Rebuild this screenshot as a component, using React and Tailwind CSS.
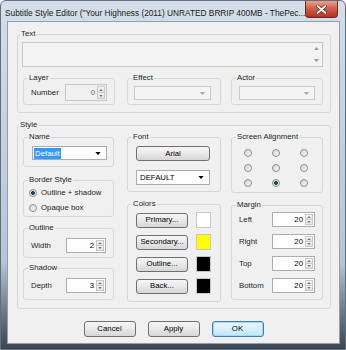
import React from 'react'

const DownArrow = ({ color = '#000', w = 7, h = 4 }) => (
  <svg width={w} height={h} viewBox="0 0 7 4"><path d="M0 0h7L3.5 4z" fill={color} /></svg>
)
const UpArrow = ({ color = '#000', w = 5, h = 3 }) => (
  <svg width={w} height={h} viewBox="0 0 7 4"><path d="M0 4h7L3.5 0z" fill={color} /></svg>
)

const GroupBox = ({ label, className, legendClass = 'ml-[4px]', children }) => (
  <fieldset className={`border border-[#d3d7dc] rounded-[3px] ${className}`}>
    <legend className={`px-[1px] leading-[10px] text-[#1e1e1e] ${legendClass}`}>{label}</legend>
    {children}
  </fieldset>
)

const Spin = ({ value, className, disabled }) => (
  <div className={`flex border ${disabled ? 'border-[#c4c7cc] bg-[#f0f0f0] text-[#6d6d6d]' : 'border-[#abadb3] bg-white text-black'} ${className}`}>
    <div className="flex-1 flex items-center justify-end pr-[2px] leading-none">{value}</div>
    <div className="flex flex-col w-[8px] my-[1px] mr-[1px] border border-[#c8c8c8]">
      <div className="flex-1 flex items-center justify-center bg-linear-to-b from-[#f4f4f4] to-[#e2e2e2] border-b border-[#c8c8c8]">
        <UpArrow color="#777" w={4} h={2} />
      </div>
      <div className="flex-1 flex items-center justify-center bg-linear-to-b from-[#f4f4f4] to-[#e2e2e2]">
        <DownArrow color="#777" w={4} h={2} />
      </div>
    </div>
  </div>
)

const Button = ({ children, className }) => (
  <div className={`flex items-center justify-center rounded-[3px] border border-[#707070] bg-linear-to-b from-[#f6f6f6] via-[#e9e9e9] to-[#d6d6d6] text-black leading-none ${className}`}>
    {children}
  </div>
)

const Radio = ({ checked }) => (
  <div className="w-[8px] h-[8px] shrink-0 rounded-full border border-[#8b8e92] bg-linear-to-br from-[#d4d6d8] to-[#f7f7f7] flex items-center justify-center">
    {checked && <div className="w-[4px] h-[4px] rounded-full bg-[#1d5673] border border-[#0f3146]" />}
  </div>
)

const DisabledCombo = ({ className }) => (
  <div className={`flex items-center justify-end pr-[5px] border border-[#c7cacf] bg-[#f4f4f4] ${className}`}>
    <DownArrow color="#a5a5a5" w={5} h={3} />
  </div>
)

export default function App() {
  return (
    <div className="w-[346px] h-[350px] flex flex-col rounded-t-[6px] border border-[#5f6f80] bg-linear-to-b from-[#d3dee9] via-[#b6c6d6] via-75% to-[#3c4650] font-['Liberation_Sans',Arial,sans-serif] text-[7.8px] overflow-hidden">
      {/* title bar */}
      <div className="h-[20px] flex items-start shrink-0">
        <div className="flex-1 pl-[4px] pt-[6px] text-[8.3px] leading-[12px] text-[#1a1a1a] whitespace-nowrap overflow-hidden">
          Subtitle Style Editor ("Your Highness (2011) UNRATED BRRIP 400MB - ThePec...
        </div>
        <div className="mr-[7px] w-[33px] h-[17px] shrink-0 rounded-b-[4px] border border-t-0 border-[#6e2a22] bg-linear-to-b from-[#e8a191] via-[#cf5a45] to-[#b3321f] flex items-center justify-center">
          <svg width="11" height="9" viewBox="0 0 11 9">
            <path d="M1.5 1l8 7M9.5 1l-8 7" stroke="#5a1d16" strokeWidth="3.2" strokeLinecap="round" />
            <path d="M1.5 1l8 7M9.5 1l-8 7" stroke="#fff" strokeWidth="1.8" strokeLinecap="round" />
          </svg>
        </div>
      </div>

      {/* client area */}
      <div className="flex-1 pl-[6px] pr-[5px] pb-[5px] flex">
        <div className="flex-1 flex flex-col border border-[#8e9fb1] bg-[#f0f0f0]">
          {/* Text group */}
          <GroupBox label="Text" legendClass="ml-[2px]" className="ml-[9px] mt-[7px] w-[314px] h-[84px]">
            <div className="ml-[4px] mt-[3px] w-[301px] h-[25px] border border-[#c3c6cb] bg-[#f3f3f3] flex justify-end">
              <div className="w-[11px] flex flex-col items-center justify-between py-[4px]">
                <UpArrow color="#9a9a9a" w={5} h={3} />
                <DownArrow color="#9a9a9a" w={5} h={3} />
              </div>
            </div>
            <div className="mt-[6px] ml-[5px] flex">
              <GroupBox label="Layer" className="w-[92px] h-[32px]">
                <div className="mt-[1px] h-[17px] flex items-center">
                  <span className="ml-[7px] w-[34px] text-[#1e1e1e]">Number</span>
                  <Spin value="0" disabled className="w-[42px] h-[17px]" />
                </div>
              </GroupBox>
              <GroupBox label="Effect" className="ml-[12px] w-[94px] h-[32px]">
                <DisabledCombo className="mt-[3px] ml-[6px] w-[77px] h-[14px]" />
              </GroupBox>
              <GroupBox label="Actor" className="ml-[10px] w-[92px] h-[32px]">
                <DisabledCombo className="mt-[3px] ml-[7px] w-[76px] h-[14px]" />
              </GroupBox>
            </div>
          </GroupBox>

          {/* Style group */}
          <GroupBox label="Style" legendClass="ml-[1px]" className="ml-[9px] mt-[7px] w-[314px] h-[189px]">
            <div className="mt-[2px] ml-[5px] flex">
              {/* left column */}
              <div className="w-[91px] flex flex-col">
                <GroupBox label="Name" className="h-[35px]">
                  <div className="mt-[4px] ml-[8px] w-[75px] h-[14px] border border-[#abadb3] bg-white flex items-center pl-[1px] pr-[5px]">
                    <span className="bg-[#3399ff] text-white leading-[11px] px-[1px]">Default</span>
                    <span className="flex-1" />
                    <DownArrow color="#000" w={6} h={3} />
                  </div>
                </GroupBox>
                <GroupBox label="Border Style" className="mt-[8px] h-[42px]">
                  <div className="h-[15px] flex items-center ml-[5px] gap-[4px] text-[#1e1e1e] whitespace-nowrap">
                    <Radio checked />
                    <span>Outline + shadow</span>
                  </div>
                  <div className="h-[15px] flex items-center ml-[5px] gap-[4px] text-[#1e1e1e] whitespace-nowrap">
                    <Radio />
                    <span>Opaque box</span>
                  </div>
                </GroupBox>
                <GroupBox label="Outline" className="mt-[6px] h-[35px]">
                  <div className="mt-[5px] h-[15px] flex items-center">
                    <span className="ml-[7px] w-[35px] text-[#1e1e1e]">Width</span>
                    <Spin value="2" className="w-[40px] h-[15px]" />
                  </div>
                </GroupBox>
                <GroupBox label="Shadow" className="mt-[5px] h-[37px]">
                  <div className="mt-[5px] h-[15px] flex items-center">
                    <span className="ml-[7px] w-[35px] text-[#1e1e1e]">Depth</span>
                    <Spin value="3" className="w-[40px] h-[15px]" />
                  </div>
                </GroupBox>
              </div>

              {/* middle column */}
              <div className="ml-[13px] w-[94px] flex flex-col">
                <GroupBox label="Font" className="h-[60px]">
                  <Button className="mt-[4px] ml-[8px] w-[74px] h-[15px]">Arial</Button>
                  <div className="mt-[9px] ml-[8px] w-[74px] h-[15px] border border-[#a9abb0] bg-white flex items-center pl-[3px] pr-[5px]">
                    <span className="flex-1 leading-none">DEFAULT</span>
                    <DownArrow color="#000" w={6} h={3} />
                  </div>
                </GroupBox>
                <GroupBox label="Colors" className="mt-[7px] h-[103px]">
                  <div className="mt-[3px] flex flex-col gap-[6px]">
                    {[
                      ['Primary...', 'bg-white'],
                      ['Secondary...', 'bg-[#ffff00]'],
                      ['Outline...', 'bg-black'],
                      ['Back...', 'bg-black'],
                    ].map(([label, color]) => (
                      <div key={label} className="h-[16px] flex items-center">
                        <Button className="ml-[8px] w-[52px] h-[15px]">{label}</Button>
                        <div className={`ml-[8px] w-[15px] h-[16px] border border-[#c6c6c6] ${color}`} />
                      </div>
                    ))}
                  </div>
                </GroupBox>
              </div>

              {/* right column */}
              <div className="ml-[10px] w-[92px] flex flex-col">
                <GroupBox label="Screen Alignment" className="h-[61px]">
                  <div className="mt-[3px] ml-[2px] w-[84px] grid grid-cols-3">
                    {[0, 1, 2, 3, 4, 5, 6, 7, 8].map((i) => (
                      <div key={i} className="h-[15px] flex items-center justify-center">
                        <Radio checked={i === 7} />
                      </div>
                    ))}
                  </div>
                </GroupBox>
                <GroupBox label="Margin" className="mt-[7px] h-[100px]">
                  <div className="mt-[2px] flex flex-col gap-[7px]">
                    {['Left', 'Right', 'Top', 'Bottom'].map((label) => (
                      <div key={label} className="h-[15px] flex items-center">
                        <span className="ml-[7px] w-[33px] text-[#1e1e1e]">{label}</span>
                        <Spin value="20" className="w-[43px] h-[15px]" />
                      </div>
                    ))}
                  </div>
                </GroupBox>
              </div>
            </div>
          </GroupBox>

          {/* dialog buttons */}
          <div className="mt-[12px] flex justify-center gap-[12px]">
            <Button className="w-[52px] h-[16px]">Cancel</Button>
            <Button className="w-[52px] h-[16px]">Apply</Button>
            <div className="w-[52px] h-[16px] flex items-center justify-center rounded-[3px] border border-[#3c7fb1] bg-linear-to-b from-[#eaf6fd] via-[#d9f0fc] to-[#bee6fd] shadow-[inset_0_0_0_1px_#a9d7f2] leading-none">
              OK
            </div>
          </div>
        </div>
      </div>
    </div>
  )
}
